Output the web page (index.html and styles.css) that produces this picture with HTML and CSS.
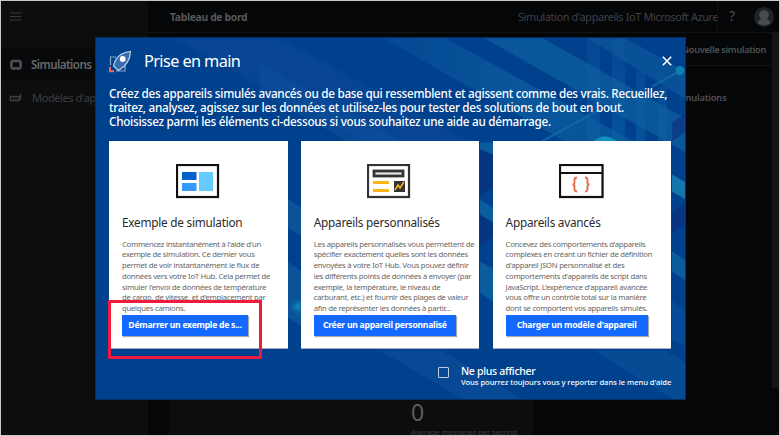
FILE: index.html
```html
<!DOCTYPE html>
<html lang="fr">
<head>
<meta charset="utf-8">
<title>Simulation d'appareils</title>
<link rel="stylesheet" href="styles.css">
</head>
<body>
<div class="app">
  <aside class="sidebar">
    <div class="menu"><svg width="12" height="9" viewBox="0 0 12 9"><path d="M0 1h11.500M0 4.500h11.500M0 8h11.500" stroke="#37393b" stroke-width="1.200"/></svg></div>
    <nav>
      <div class="nav-item active">
        <svg width="14" height="12" viewBox="0 0 14 12"><rect x="2.500" y="2" width="9" height="7.500" rx="1.500" fill="none" stroke="#4c4f52" stroke-width="2.400"/><path d="M1.500 4v4M12.500 4v4" stroke="#4c4f52" stroke-width="1"/></svg>
        <span>Simulations</span>
      </div>
      <div class="nav-item">
        <svg width="14" height="12" viewBox="0 0 14 12"><path d="M1.500 4.500h8.500v4H1.500zM10 8.500l1.500-1.500V2M4 6.500h1M6.500 6.500h1" fill="none" stroke="#3b3d3f" stroke-width="1.300"/></svg>
        <span>Modèles d'ap</span>
      </div>
    </nav>
  </aside>
  <div class="main">
    <header class="topbar">
      <span class="crumb">Tableau de bord</span>
      <span class="product">Simulation d'appareils IoT Microsoft Azure</span>
      <span class="help">?</span>
      <svg class="avatar" width="20" height="20" viewBox="0 0 20 20"><circle cx="10" cy="10" r="10" fill="#202325"/><circle cx="10" cy="8" r="4.800" fill="#484b4d"/><path d="M3.500 16.500Q5 12 8 12h4q3 0 4.500 4.500Q10 20 3.500 16.500z" fill="#484b4d"/></svg>
    </header>
    <div class="toolbar"><span>Nouvelle simulation</span></div>
    <div class="content">
      <span class="heading">Simulations</span>
      <div class="stats"><div class="stat"><b>0</b><span>Average messages per second</span></div></div>
    </div>
    <div class="scroll"></div>
  </div>
</div>

<div class="modal">
  <svg class="art" width="590" height="364" viewBox="96 36.500 590 364">
    <defs>
      <linearGradient id="teal" x1="0" x2="1"><stop offset="0" stop-color="#0c5aa0" stop-opacity=".3"/><stop offset=".55" stop-color="#0b5b9f" stop-opacity=".8"/><stop offset="1" stop-color="#0a5b9f" stop-opacity=".7"/></linearGradient>
      <linearGradient id="bar" x1="0" x2="0" y1="0" y2="1"><stop offset="0" stop-color="#145aa2" stop-opacity=".45"/><stop offset="1" stop-color="#0a62a5" stop-opacity=".8"/></linearGradient>
      <radialGradient id="glow"><stop offset="0" stop-color="#1590bd"/><stop offset="1" stop-color="#0869a8" stop-opacity="0"/></radialGradient>
    </defs>
    <path d="M174 37h106l192 104H364z" fill="#0c4797" opacity=".55"/>
    <path d="M384 37h62l190 104h-69z" fill="url(#teal)"/>
    <path d="M485 37h58l143 80v34z" fill="#0c5b9e" opacity=".85"/>
    <path d="M588 37h38l60 33v28z" fill="#0d5a9f" opacity=".6"/>
    <path d="M587 37h13v104h-13zM612 37h13v104h-13zM636 70h9v71h-9zM658 85h9v56h-9z" fill="url(#bar)" opacity=".65"/>
    <path d="M350 141h55L260 62v30z" fill="#10529b" opacity=".45"/>
    <path d="M672 121l14-9v18l-14 10zM672 210l14-9v22l-14 8z" fill="#0c2f7e" opacity=".65"/>
    <path d="M672 173l14 8v17l-14-8z" fill="#1576ad"/>
    <path d="M672 250l14 9v20l-14-9z" fill="#0c5ca0"/>
    <path d="M672 300l14 9v36l-14-7z" fill="#074b98"/>
    <path d="M540 141l62-34M652 85l27-15" stroke="#0e6cab" stroke-width="2.500" opacity=".75"/>
    <circle cx="680" cy="69" r="4.500" fill="#107fb0"/>
    <circle cx="605" cy="151" r="16" fill="#128fc1"/>
    <path d="M287 197l14 9v28l-14-8zM287 260l14 9v55l-14-9z" fill="#0a5399"/>
    <circle cx="298" cy="305" r="9" fill="url(#glow)"/>
    <path d="M480 145l13 8v33l-13 8zM480 214l13-9v30l-13 9z" fill="#072f7d" opacity=".7"/>
    <path d="M480 141h13v12l-13-5zM480 198l13 8v15l-13-8zM480 260l13 7v33l-13-9z" fill="#0a5c9f"/>
    <path d="M380 349h61l86 51h-60z" fill="#0c4f99" opacity=".65"/>
    <path d="M594 349h72l20 13v38h-9z" fill="#0b5b9f" opacity=".45"/>
  </svg>
  <div class="modal-head">
    <svg class="rocket" width="23" height="23" viewBox="0 0 23 23"><path d="M7 7H1.500v8M16 15v6H7" fill="none" stroke="#8ba8cf" stroke-width="1.200"/><path d="M1 17v4.300H5" fill="none" stroke="#f36b58" stroke-width="2"/><path d="M4.500 16Q7 3 21.500 1.500Q21 14 9.500 20.500z" fill="#376dad" stroke="#bdd0e8" stroke-width="1.200"/><circle cx="13.700" cy="9" r="2.900" fill="#fff"/></svg>
    <h1>Prise en main</h1>
    <svg class="close" width="10" height="10" viewBox="0 0 10 10"><path d="M.8.8l8.400 8.400M9.200.8L.8 9.200" stroke="#fff" stroke-width="1.600"/></svg>
  </div>
  <p class="intro">Créez des appareils simulés avancés ou de base qui ressemblent et agissent comme des vrais. Recueillez,<br>traitez, analysez, agissez sur les données et utilisez-les pour tester des solutions de bout en bout.<br>Choisissez parmi les éléments ci-dessous si vous souhaitez une aide au démarrage.</p>
  <div class="cards">
    <section class="card">
      <svg class="icon" width="44" height="35" viewBox="0 0 44 35"><rect x="1" y="1" width="41" height="32" fill="#fff" stroke="#111" stroke-width="2.200"/><path d="M6 8h14.500v8H6z" fill="#0062cb"/><path d="M6 19h14.500v8H6z" fill="#3399fb"/><path d="M23 8h14v19H23z" fill="#66ccff"/></svg>
      <h2>Exemple de simulation</h2>
      <p>Commencez instantanément à l'aide d'un<br>exemple de simulation. Ce dernier vous<br>permet de voir instantanément le flux de<br>données vers votre IoT Hub. Cela permet de<br>simuler l'envoi de données de température<br>de cargo, de vitesse, et d'emplacement par<br>quelques camions.</p>
      <button class="narrow">Démarrer un exemple de s...</button>
    </section>
    <section class="card">
      <svg class="icon" width="44" height="35" viewBox="0 0 44 35"><rect x="1" y="1" width="41" height="32" fill="#fff" stroke="#333" stroke-width="2.200"/><rect x="7" y="7" width="29" height="5" fill="#e6e6e6" stroke="#333" stroke-width="2.800"/><path d="M6 18.500h16M6 26.500h16" stroke="#ffb31a" stroke-width="3"/><path d="M27 17h11v11H27z" fill="#333"/><path d="M28 26l3-5 2 3 4-6" fill="none" stroke="#ffb31a" stroke-width="1.500"/></svg>
      <h2>Appareils personnalisés</h2>
      <p>Les appareils personnalisés vous permettent de<br>spécifier exactement quelles sont les données<br>envoyées à votre IoT Hub. Vous pouvez définir<br>les différents points de données à envoyer (par<br>exemple, la température, le niveau de<br>carburant, etc.) et fournir des plages de valeur<br>afin de représenter les données à partir...</p>
      <button>Créer un appareil personnalisé</button>
    </section>
    <section class="card">
      <svg class="icon" width="45" height="35" viewBox="0 0 45 35"><rect x="1" y="1" width="42.500" height="32" fill="#fff" stroke="#111" stroke-width="2.200"/><path d="M1 9h43" stroke="#111" stroke-width="2.200"/><path d="M18 13.500q-2.500 0-2.500 2.500v2.500q0 2-2 2 2 0 2 2V25q0 2.500 2.500 2.500M26 13.500q2.500 0 2.500 2.500v2.500q0 2 2 2-2 0-2 2V25q0 2.500-2.500 2.500" fill="none" stroke="#e8704f" stroke-width="1.900"/></svg>
      <h2>Appareils avancés</h2>
      <p>Concevez des comportements d'appareils<br>complexes en créant un fichier de définition<br>d'appareil JSON personnalisé et des<br>comportements d'appareils de script dans<br>JavaScript. L'expérience d'appareil avancée<br>vous offre un contrôle total sur la manière<br>dont se comportent vos appareils simulés.</p>
      <button>Charger un modèle d'appareil</button>
    </section>
    <div class="highlight"></div>
  </div>
  <label class="optout"><span class="box"></span><span class="labels"><b>Ne plus afficher</b><small>Vous pourrez toujours vous y reporter dans le menu d'aide</small></span></label>
</div>
</body>
</html>
```
FILE: styles.css
```css
* { box-sizing: border-box; }
body { margin: 0; width: 780px; height: 436px; overflow: hidden; position: relative; background: #c8c8c8; font-family: "Noto Sans", "Open Sans", sans-serif; white-space: nowrap; }
h1, h2, p { margin: 0; font-weight: 400; }
svg { display: block; flex: none; }
.app { display: flex; width: 780px; height: 436px; padding: 1px 0 0; border: 0 solid #c8c8c8; border-width: 0 1px 1px; }
.sidebar { width: 147px; background: #0d0d0d; overflow: hidden; flex: none; }
.menu { height: 47px; padding: 11px 0 0 9px; }
.nav-item { height: 33px; display: flex; align-items: center; gap: 9px; padding-left: 8px; color: #3b3d40; font-size: 11.200px; letter-spacing: -.5px; }
.nav-item.active { color: #66686b; font-weight: 600; background: #08090a; gap: 8px; font-size: 11.600px; letter-spacing: -.55px; }
.main { flex: 1; position: relative; display: flex; flex-direction: column; background: #050608; overflow: hidden; }
.topbar { height: 32px; flex: none; display: flex; align-items: center; padding-left: 22px; border-bottom: 1px solid #111315; }
.topbar > * { flex: none; }
.crumb { color: #55585a; font-weight: 700; font-size: 10.300px; letter-spacing: -.3px; width: 348px; }
.product { color: #3f4245; font-size: 10.900px; letter-spacing: -.36px; width: 199px; }
.help { color: #4a4d50; font-size: 14px; width: 37px; padding-left: 11px; border-left: 1px solid #0f1012; height: 31px; line-height: 29px; }
.toolbar { height: 33px; flex: none; border-bottom: 1px solid #131517; display: flex; align-items: center; justify-content: flex-end; padding-right: 13px; color: #4f5254; font-size: 9.200px; letter-spacing: -.3px; font-weight: 600; }
.content { flex: 1; padding: 25px 0 0 527px; color: #4f5254; font-size: 9.400px; letter-spacing: -.2px; font-weight: 600; display: flex; flex-direction: column; }
.stats { margin: auto 0 0 -506px; width: 364px; height: 60px; background: #0d0d0d; padding: 25px 0 0 242px; }
.stat b { display: block; font-size: 23px; line-height: 25px; font-weight: 400; color: #5c5c5c; }
.stat span { display: block; font-size: 7.800px; line-height: 14px; font-weight: 400; color: #3c3c3c; }
.scroll { position: absolute; right: 0; top: 32px; width: 7px; height: 355px; background: #131416; }
.modal { position: absolute; left: 95px; top: 37px; width: 591px; height: 363px; background: #00418d; border: 1px solid #062e60; color: #fff; padding: 0 13px; overflow: hidden; }
.art { position: absolute; left: 0; top: 0; }
.modal-head { position: relative; display: flex; align-items: center; height: 48px; padding-bottom: 2px; }
.rocket { margin-right: 12px; }
.modal h1 { font-size: 16.300px; letter-spacing: -.6px; flex: 1; }
.intro { position: relative; height: 55px; font-size: 11.700px; letter-spacing: -.26px; line-height: 14px; font-weight: 500; }
.cards { position: relative; display: grid; grid-template-columns: repeat(3, 178.500px); gap: 13.300px; height: 208px; }
.card { background: #fff; padding: 23px 13px 0; color: #666; border: 0 solid #a5abc8; border-bottom-width: 1px; }
.card .icon { margin-left: 54px; height: 35px; filter: drop-shadow(.8px .8px .4px #bbb); }
.card:nth-child(2) .icon { margin-left: 53px; }
.card:nth-child(3) .icon { margin-left: 53px; }
.card h2 { color: #2b2b2b; font-size: 11.800px; letter-spacing: -.25px; line-height: 16px; margin-top: 15px; }
.card p { font-size: 7.700px; letter-spacing: -.26px; line-height: 10.750px; margin-top: 8.500px; height: 76px; }
.card button { font: 700 8.600px/21px "Noto Sans", sans-serif; letter-spacing: -.25px; color: #fff; background: #146aff; border: 0; padding: 0; width: 142px; height: 21px; display: block; box-shadow: 1px 1px 1px #aaa; }
.card button.narrow { width: 126px; }
.highlight { position: absolute; left: -1px; top: 159px; width: 154px; height: 59px; border: 3px solid #ef1a3e; }
.optout { position: relative; display: flex; margin: 15px 0 0 329px; gap: 12px; }
.box { width: 11px; height: 11px; border: 1px solid #c0cbe2; border-radius: 1px; margin-top: 3px; }
.labels { display: flex; flex-direction: column; }
.optout b { font-size: 10.500px; letter-spacing: -.3px; line-height: 14px; font-weight: 500; }
.optout small { font-size: 7.600px; letter-spacing: -.04px; line-height: 8px; font-weight: 500; }
```
